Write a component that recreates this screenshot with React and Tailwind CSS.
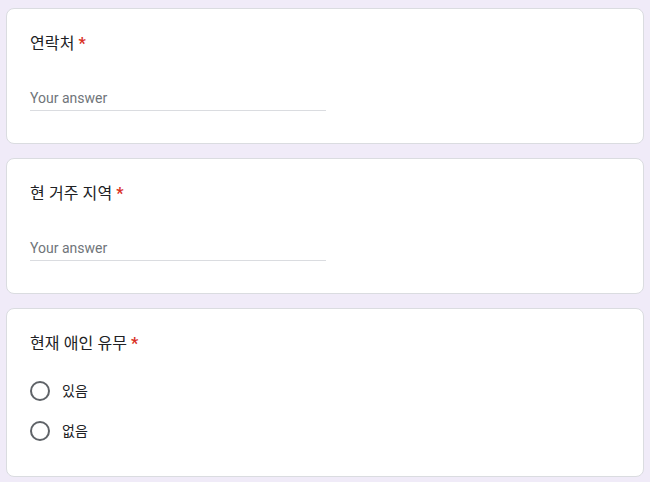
import React from "react";

const font = { fontFamily: 'Roboto, "Noto Sans CJK KR", sans-serif' };

const Title = ({ children }) => (
  <div className="text-[16px] leading-6 text-[#202124] tracking-[0.1px]">
    {children}
    <span className="text-[#d93025] font-bold ml-1">*</span>
  </div>
);

const TextQuestion = ({ title }) => (
  <div className="w-[638px] bg-white border border-[#dadce0] rounded-lg pt-[23px] pb-[32px] pl-[23px] pr-6">
    <Title>{title}</Title>
    <div className="mt-[30px] w-[296px] h-[25px] border-b border-[#dadce0] text-[14px] leading-6 text-[#70757a]">
      Your answer
    </div>
  </div>
);

const Radio = ({ label }) => (
  <div className="flex items-center h-10 gap-3">
    <div className="w-5 h-5 rounded-full border-2 border-[#5f6368]" />
    <span className="text-[14px] text-[#202124]">{label}</span>
  </div>
);

export default function App() {
  return (
    <div style={font} className="min-h-screen bg-[#f0ebf8] pt-2 pl-[6px] flex flex-col gap-[14px]">
      <TextQuestion title="연락처" />
      <TextQuestion title="현 거주 지역" />
      <div className="w-[638px] bg-white border border-[#dadce0] rounded-lg pt-[23px] pb-[25px] pl-[23px] pr-6">
        <Title>현재 애인 유무</Title>
        <div className="mt-[15px] flex flex-col">
          <Radio label="있음" />
          <Radio label="없음" />
        </div>
      </div>
    </div>
  );
}
